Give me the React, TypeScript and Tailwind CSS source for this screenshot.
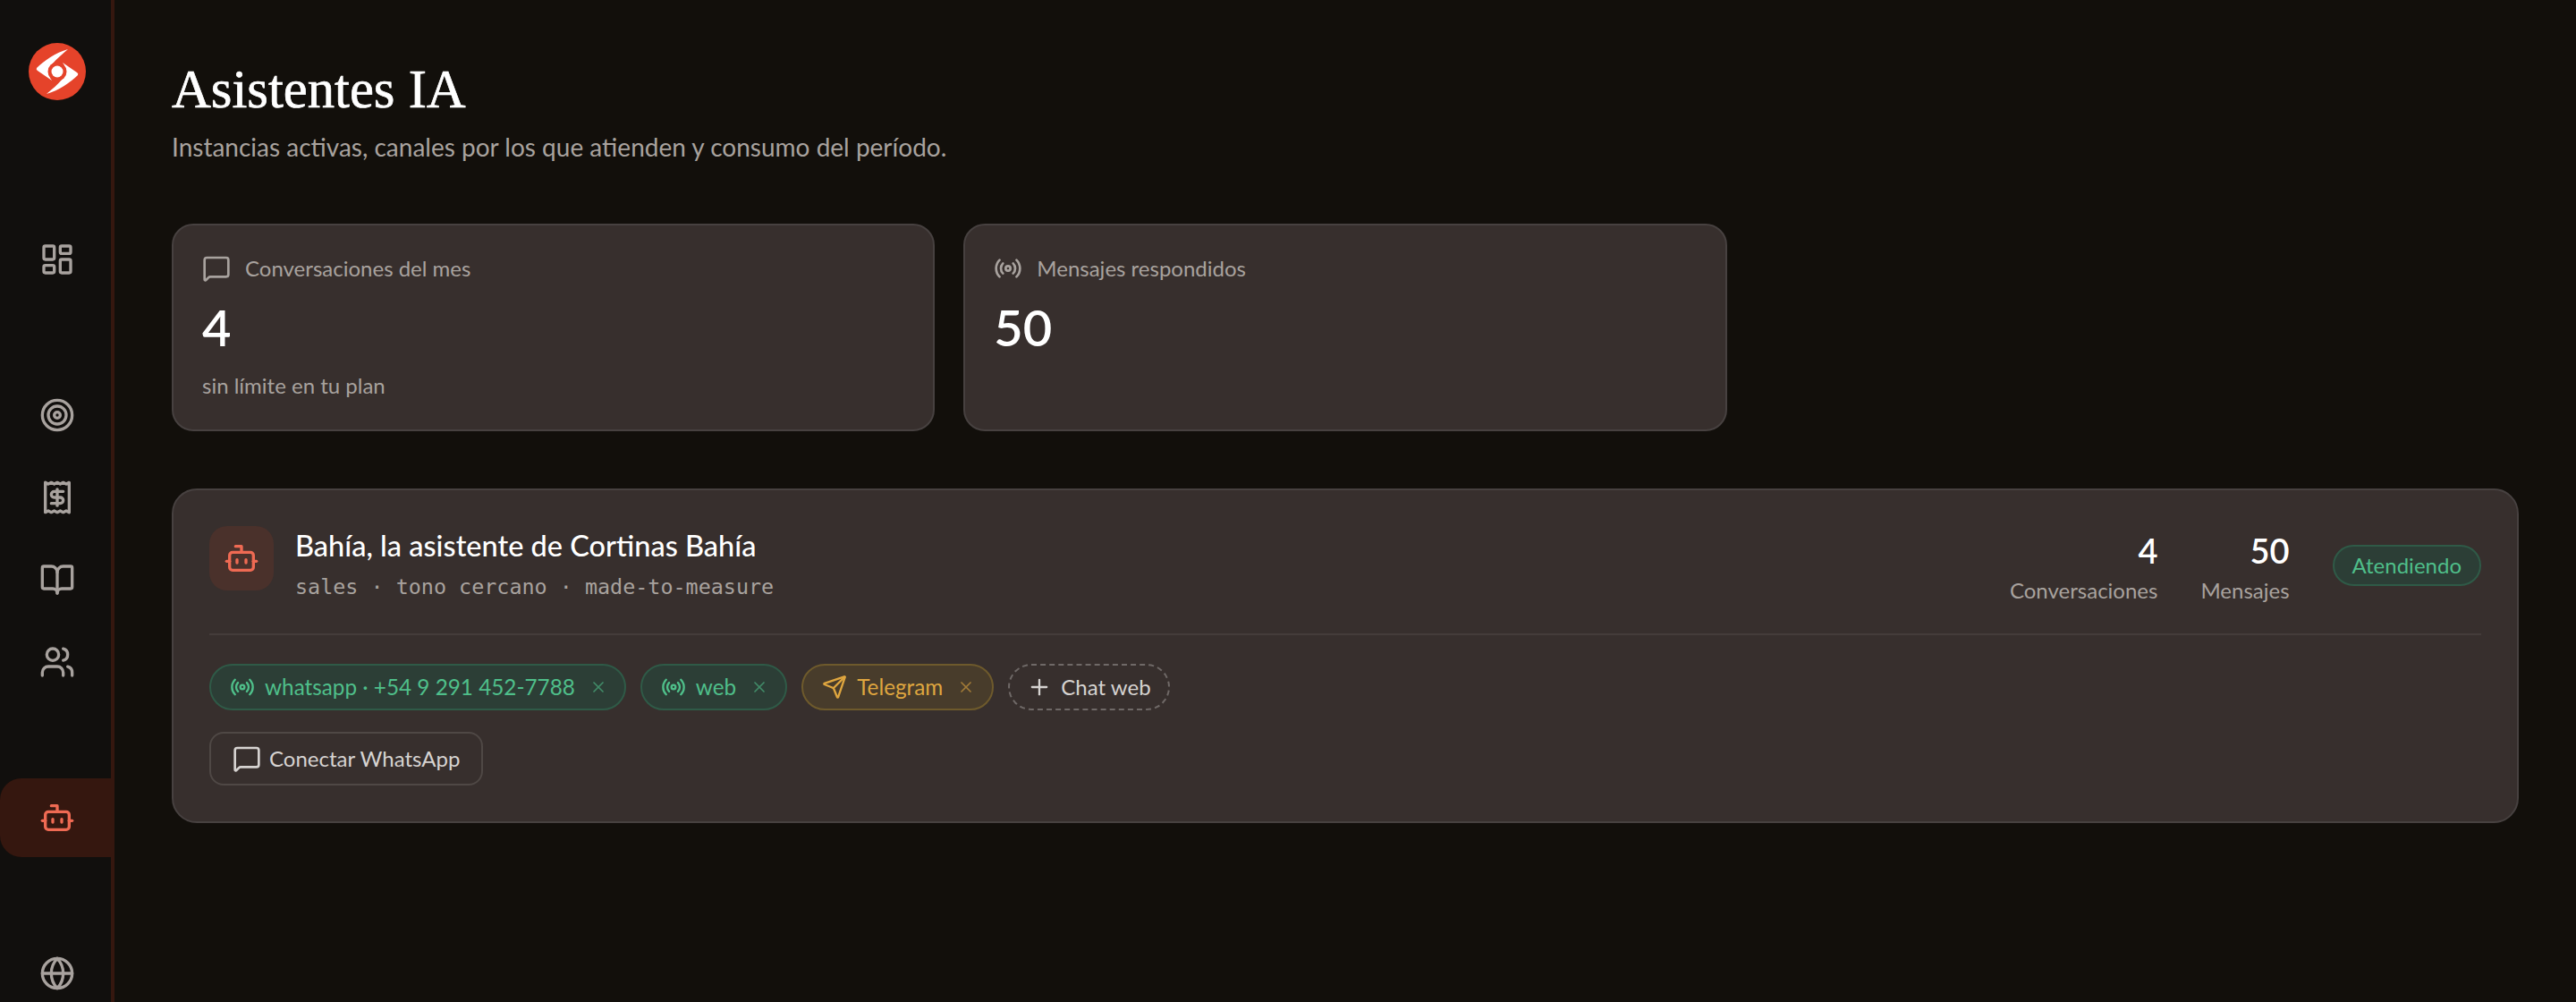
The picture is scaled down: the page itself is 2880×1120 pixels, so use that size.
import React from 'react';
import { Bot, BookOpen, Globe, LayoutDashboard, MessageSquare, Plus, Radio, Receipt, Send, Target, Users, X } from 'lucide-react';

const navGroups = [
  [{ icon: LayoutDashboard }],
  [{ icon: Target }, { icon: Receipt }, { icon: BookOpen }, { icon: Users }],
  [{ icon: Bot, active: true }],
  [{ icon: Globe }],
];

const Logo = () => (
  <svg width="64" height="64" viewBox="0 0 64 64">
    <circle cx="32" cy="32" r="32" fill="#e5432a" />
    <path d="M44 7C30 11 17 20 9 28Q8 30 10 31L26 42C22 36 21 29 26 24C31 18 38 12 44 7Z" fill="#fff" />
    <path d="M20 57C34 53 47 44 55 36Q56 34 54 33L38 22C42 28 43 35 38 40C33 46 26 52 20 57Z" fill="#fff" />
    <circle cx="32" cy="32" r="10.5" fill="#e5432a" />
    <circle cx="32" cy="32" r="6.5" fill="#fff" />
  </svg>
);

const Sidebar = () => (
  <aside className="flex h-[1120px] w-[128px] shrink-0 flex-col overflow-hidden border-r-4 border-[#35170f] bg-[#110f0d]">
    <div className="flex h-[246px] w-[128px] shrink-0 justify-center pt-[48px]">
      <Logo />
    </div>
    <nav className="flex w-[128px] flex-col gap-[86px]">
      {navGroups.map((group, i) => (
        <div key={i} className="flex flex-col gap-[4px]">
          {group.map((item, j) => {
            const Icon = item.icon;
            return (
              <div
                key={j}
                className={
                  item.active
                    ? 'flex h-[88px] items-center justify-center rounded-l-[24px] bg-[#35170f] text-[#ef6a53]'
                    : 'flex h-[88px] items-center justify-center text-[#a8a29e]'
                }
              >
                <Icon size={40} strokeWidth={2} />
              </div>
            );
          })}
        </div>
      ))}
    </nav>
  </aside>
);

const StatCard = ({ icon: Icon, label, value, note }: { icon: typeof Radio; label: string; value: string; note?: string }) => (
  <div className="h-[232px] rounded-[24px] border-2 border-[#474140] bg-[#372f2d] px-[32px] pt-[32px]">
    <div className="flex h-[32px] items-center gap-[16px] text-[24px] text-[#a8a29e]">
      <Icon size={32} strokeWidth={2} className="shrink-0" />
      <span>{label}</span>
    </div>
    <div className="mt-[14px] text-[56px] font-semibold leading-[72px] text-white">{value}</div>
    {note && <div className="mt-[13px] text-[24px] leading-[32px] text-[#a8a29e]">{note}</div>}
  </div>
);

const Chip = ({ icon: Icon, label, tone }: { icon: typeof Radio; label: string; tone: 'green' | 'amber' }) => (
  <div
    className={
      tone === 'green'
        ? 'flex h-[52px] items-center gap-[11px] rounded-full border-2 border-[#2f5a47] bg-[#2c3e36] pl-[21px] pr-[19px] text-[24.3px] text-[#4fbf8a]'
        : 'flex h-[52px] items-center gap-[11px] rounded-full border-2 border-[#6e5a2c] bg-[#483c2b] pl-[21px] pr-[19px] text-[24.3px] text-[#dfa63f]'
    }
  >
    <Icon size={28} strokeWidth={2} className="shrink-0" />
    <span>{label}</span>
    <X size={20} strokeWidth={2} className="ml-[5px] shrink-0 opacity-60" />
  </div>
);

const AgentStat = ({ value, label }: { value: string; label: string }) => (
  <div className="flex flex-col items-end pt-[4px]">
    <div className="text-[38px] font-semibold leading-[46px] text-white">{value}</div>
    <div className="mt-[4px] text-[24px] leading-[36px] text-[#a8a29e]">{label}</div>
  </div>
);

export default function App() {
  return (
    <div className="flex h-[1120px] w-[2880px] overflow-hidden bg-[#120f0b] font-['Lato',sans-serif]">
      <Sidebar />
      <main className="flex-1 px-[64px] pt-[64px]">
        <h1 className="font-['Liberation_Serif',serif] text-[60.7px] leading-[72px] text-white [-webkit-text-stroke:0.7px_white]">Asistentes IA</h1>
        <p className="mt-[8px] text-[28px] leading-[40px] text-[#a8a29e]">
          Instancias activas, canales por los que atienden y consumo del período.
        </p>

        <div className="mt-[66px] grid grid-cols-3 gap-[32px]">
          <StatCard icon={MessageSquare} label="Conversaciones del mes" value="4" note="sin límite en tu plan" />
          <StatCard icon={Radio} label="Mensajes respondidos" value="50" />
        </div>

        <section className="mt-[64px] h-[374px] rounded-[28px] border-2 border-[#474140] bg-[#372f2d] p-[40px]">
          <div className="flex h-[122px] items-start justify-between border-b-2 border-[#443c3a]">
            <div className="flex gap-[24px]">
              <div className="flex h-[72px] w-[72px] items-center justify-center rounded-[20px] bg-[#4a312b] text-[#ef6a53]">
                <Bot size={40} strokeWidth={2} />
              </div>
              <div>
                <div className="text-[32.5px] font-medium leading-[44px] text-white">Bahía, la asistente de Cortinas Bahía</div>
                <div className="mt-[8px] font-['DejaVu_Sans_Mono',monospace] text-[23.4px] leading-[32px] text-[#a8a29e]">
                  sales · tono cercano · made-to-measure
                </div>
              </div>
            </div>
            <div className="flex items-start">
              <div className="flex gap-[48px]">
                <AgentStat value="4" label="Conversaciones" />
                <AgentStat value="50" label="Mensajes" />
              </div>
              <div className="ml-[48px] mt-[21px] flex h-[46px] items-center rounded-full border-2 border-[#2f5a47] bg-[#2c3e36] px-[20px] text-[24px] text-[#4fbf8a]">
                Atendiendo
              </div>
            </div>
          </div>

          <div className="mt-[32px] flex gap-[16px]">
            <Chip icon={Radio} label="whatsapp · +54 9 291 452-7788" tone="green" />
            <Chip icon={Radio} label="web" tone="green" />
            <Chip icon={Send} label="Telegram" tone="amber" />
            <div className="flex h-[52px] items-center gap-[10px] rounded-full border-2 border-dashed border-[#6f6967] px-[19px] text-[24px] text-[#d6d3d1]">
              <Plus size={28} strokeWidth={2} className="shrink-0" />
              <span>Chat web</span>
            </div>
          </div>

          <div className="mt-[24px] flex h-[60px] w-[306px] items-center gap-[9px] rounded-[16px] border-2 border-[#4f4845] px-[24px] text-[24px] text-[#d6d3d1]">
            <MessageSquare size={32} strokeWidth={2} className="shrink-0" />
            <span className="whitespace-nowrap">Conectar WhatsApp</span>
          </div>
        </section>
      </main>
    </div>
  );
}
